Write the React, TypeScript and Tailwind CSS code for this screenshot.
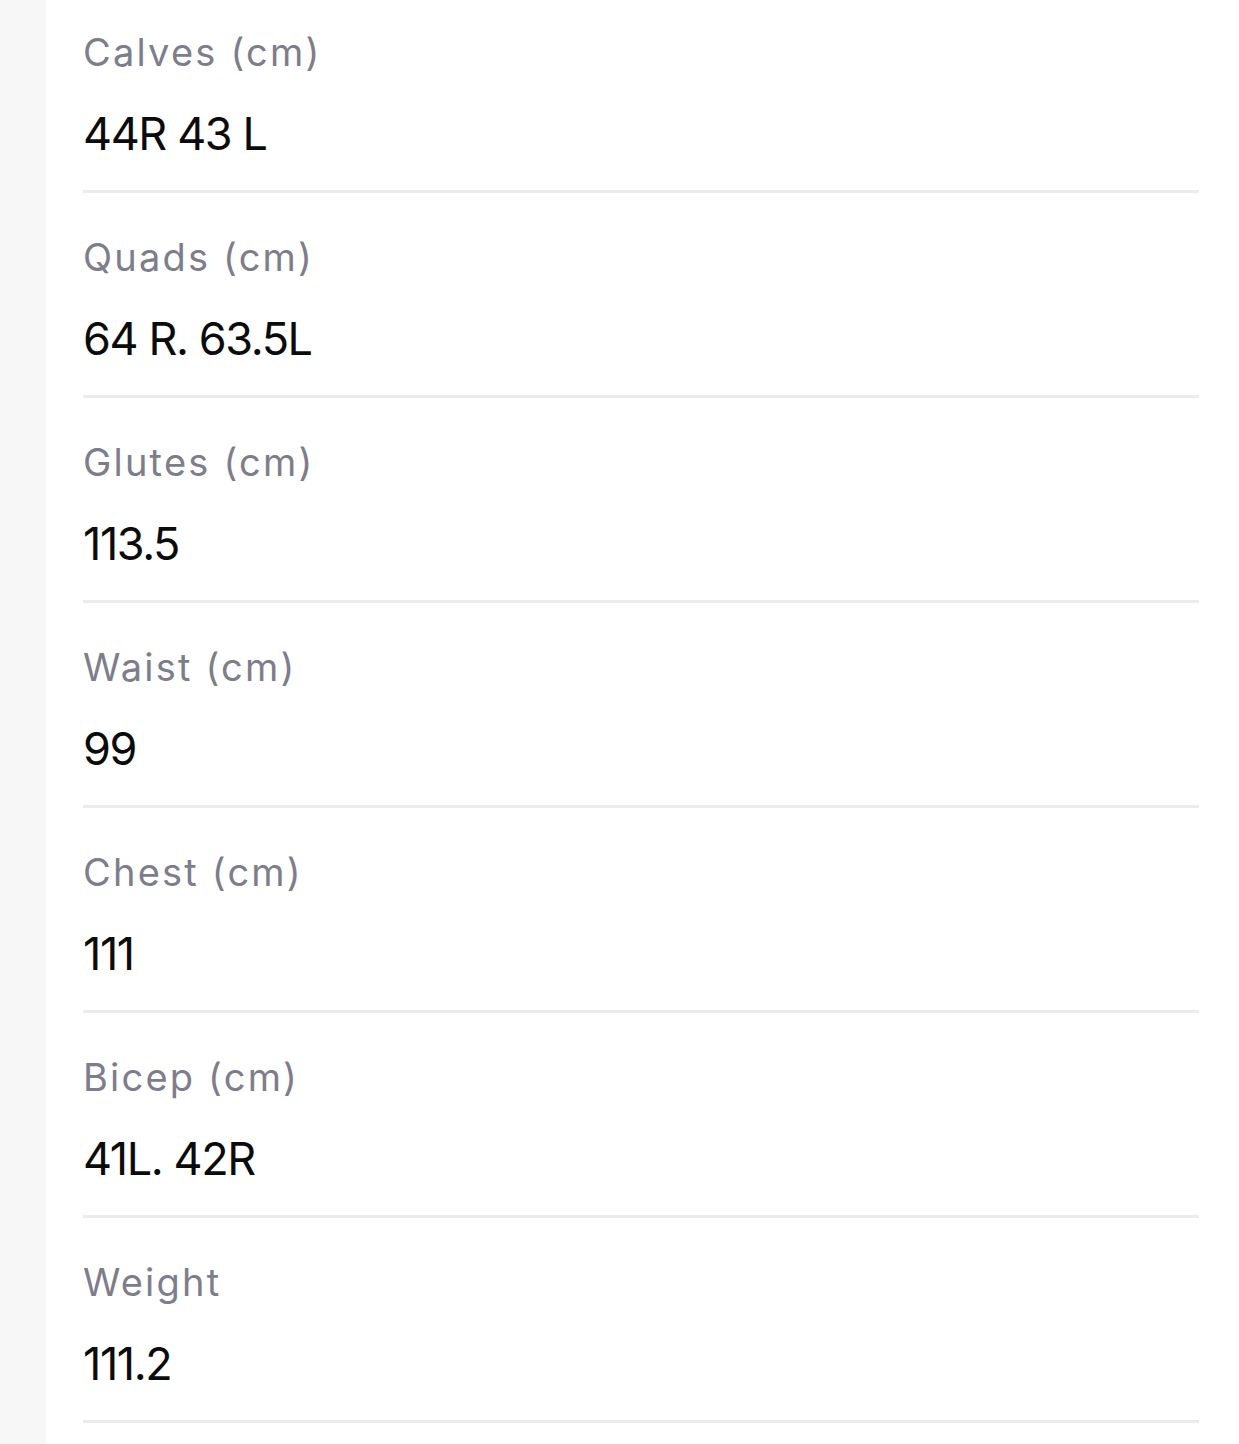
const rows = [
  { label: "Calves (cm)", value: "44R 43 L" },
  { label: "Quads (cm)", value: "64 R. 63.5L" },
  { label: "Glutes (cm)", value: "113.5" },
  { label: "Waist (cm)", value: "99" },
  { label: "Chest (cm)", value: "111" },
  { label: "Bicep (cm)", value: "41L. 42R" },
  { label: "Weight", value: "111.2" },
];

export default function App() {
  return (
    <div className="flex h-[1444px] overflow-hidden bg-white font-['Inter',sans-serif]">
      <div className="w-[46px] shrink-0 bg-[#f7f7f8]" />
      <div className="flex-1 pl-[37px] pr-[40px]">
        {rows.map((r) => (
          <div key={r.label} className="flex flex-col pt-[44px] first:pt-8 border-b-[3px] border-[#ececee]">
            <div className="text-[38px] leading-[40px] tracking-[2.2px] text-[#7d7d8c]">{r.label}</div>
            <div className="mt-[36px] mb-[30px] text-[45px] leading-[52px] tracking-[-1.4px] text-[#0b0b0b]">{r.value}</div>
          </div>
        ))}
      </div>
    </div>
  );
}
